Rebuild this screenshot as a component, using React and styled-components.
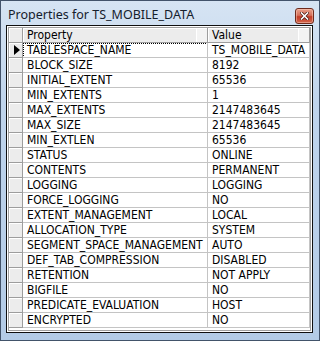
import React from 'react';
import styled, { createGlobalStyle } from 'styled-components';

const GlobalStyle = createGlobalStyle`
  html, body {
    margin: 0;
    padding: 0;
    background: #fff;
  }
  #root {
    width: 320px;
    height: 341px;
  }
`;

const rows = [
  ['TABLESPACE_NAME', 'TS_MOBILE_DATA'],
  ['BLOCK_SIZE', '8192'],
  ['INITIAL_EXTENT', '65536'],
  ['MIN_EXTENTS', '1'],
  ['MAX_EXTENTS', '2147483645'],
  ['MAX_SIZE', '2147483645'],
  ['MIN_EXTLEN', '65536'],
  ['STATUS', 'ONLINE'],
  ['CONTENTS', 'PERMANENT'],
  ['LOGGING', 'LOGGING'],
  ['FORCE_LOGGING', 'NO'],
  ['EXTENT_MANAGEMENT', 'LOCAL'],
  ['ALLOCATION_TYPE', 'SYSTEM'],
  ['SEGMENT_SPACE_MANAGEMENT', 'AUTO'],
  ['DEF_TAB_COMPRESSION', 'DISABLED'],
  ['RETENTION', 'NOT APPLY'],
  ['BIGFILE', 'NO'],
  ['PREDICATE_EVALUATION', 'HOST'],
  ['ENCRYPTED', 'NO'],
];

const gridFont = `"DejaVu Sans Condensed", "Liberation Sans Narrow", "Liberation Sans", sans-serif`;

const Window = styled.div`
  width: 320px;
  height: 341px;
  box-sizing: border-box;
  border: 1px solid #42536a;
  background: linear-gradient(#d6e4f3, #bfd4ec 30%, #b3cbe6);
  display: flex;
  flex-direction: column;
`;

const TitleBar = styled.div`
  height: 24px;
  display: flex;
  align-items: center;
  justify-content: space-between;
  padding: 0 5px 0 7px;
`;

const Title = styled.span`
  font-family: "Noto Sans", "Open Sans", sans-serif;
  font-size: 12.5px;
  color: #15202c;
  padding-top: 3px;
`;

const CloseButton = styled.div`
  width: 19px;
  height: 16px;
  margin-top: 5px;
  box-sizing: border-box;
  border: 1px solid #6d2a1c;
  border-radius: 3px;
  background: linear-gradient(#eaa08a, #d4705a 45%, #c23b26 55%, #d2654c);
  box-shadow: inset 0 0 0 1px rgba(255, 215, 200, 0.45);
  display: flex;
  align-items: center;
  justify-content: center;
`;

const Client = styled.div`
  flex: 1;
  margin: 0 6px 7px 5px;
  border: 1px solid #0f0f0f;
  background: #fff;
  padding: 1px;
  display: flex;
`;

const Grid = styled.div`
  flex: 1;
  border: 1px solid #a0a0a0;
  background: #fff;
  display: grid;
  grid-template-columns: 14px 185px 102px;
  grid-auto-rows: 15px;
  align-content: start;
  font-family: ${gridFont};
  font-size: 12px;
  color: #000;
`;

const Fixed = styled.div`
  box-sizing: border-box;
  background: #ececec;
  border-right: 1px solid #9d9d9d;
  border-bottom: 1px solid #9d9d9d;
  box-shadow: inset 1px 1px 0 #fff;
  position: relative;
  display: flex;
  align-items: center;
`;

const HeaderCell = styled(Fixed)`
  padding-left: 4px;
  line-height: 14px;
`;

const HeaderTail = styled.div`
  position: absolute;
  top: 1px;
  right: 0;
  bottom: 0;
  width: 10px;
  background: #f3f3f3;
  border-left: 1px solid #fff;
`;

const Pointer = styled.div`
  width: 0;
  height: 0;
  margin-left: 5px;
  border-top: 5px solid transparent;
  border-bottom: 5px solid transparent;
  border-left: 6px solid #000;
`;

const Cell = styled.div`
  box-sizing: border-box;
  border-right: 1px solid #c4c4c4;
  border-bottom: 1px solid #c4c4c4;
  padding-left: 4px;
  line-height: 14px;
  white-space: nowrap;
  overflow: hidden;
  position: relative;

  ${props =>
    props.focused &&
    `
    &::after {
      content: '';
      position: absolute;
      inset: 0 -1px -1px 0;
      border: 1px dotted #000;
    }
  `}
`;

const CloseGlyph = () => (
  <svg width="9" height="8" viewBox="0 0 9 8">
    <path d="M1.5 1 L7.5 7 M7.5 1 L1.5 7" stroke="#4a1a10" strokeWidth="3" strokeLinecap="square" />
    <path d="M1.5 1 L7.5 7 M7.5 1 L1.5 7" stroke="#fff" strokeWidth="1.6" strokeLinecap="square" />
  </svg>
);

export default function App() {
  return (
    <>
      <GlobalStyle />
      <Window>
        <TitleBar>
          <Title>Properties for TS_MOBILE_DATA</Title>
          <CloseButton>
            <CloseGlyph />
          </CloseButton>
        </TitleBar>
        <Client>
          <Grid>
            <Fixed />
            <HeaderCell>
              Property
              <HeaderTail />
            </HeaderCell>
            <HeaderCell>
              Value
              <HeaderTail />
            </HeaderCell>
            {rows.map(([name, value], i) => (
              <React.Fragment key={name}>
                <Fixed>{i === 0 && <Pointer />}</Fixed>
                <Cell focused={i === 0}>{name}</Cell>
                <Cell>{value}</Cell>
              </React.Fragment>
            ))}
          </Grid>
        </Client>
      </Window>
    </>
  );
}
